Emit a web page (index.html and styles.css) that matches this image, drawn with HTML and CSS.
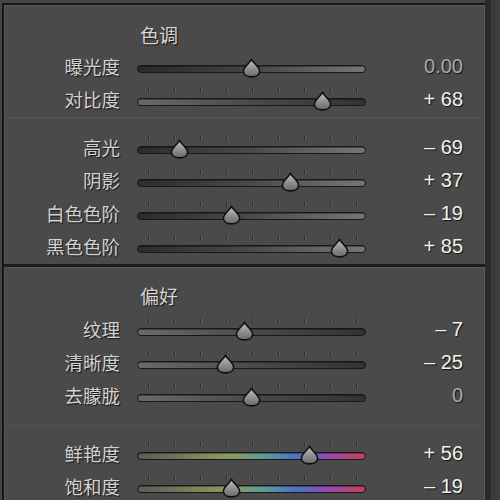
FILE: index.html
```html
<!DOCTYPE html>
<html lang="zh-CN">
<head>
<meta charset="utf-8">
<title>调整</title>
<link rel="stylesheet" href="styles.css">
</head>
<body>
<svg width="0" height="0" class="defs" aria-hidden="true">
  <defs>
    <linearGradient id="thumbFill" x1="0" y1="0" x2="0" y2="1">
      <stop offset="0" stop-color="#c4c4c4"/>
      <stop offset="0.55" stop-color="#8e8e8e"/>
      <stop offset="1" stop-color="#6a6a6a"/>
    </linearGradient>
    <symbol id="thumb" viewBox="0 0 19 20">
      <path d="M9.5 1.2 C10.6 4.6 17.6 8.6 17.6 13.2 C17.6 16.8 14 18.9 9.5 18.9 C5 18.9 1.4 16.8 1.4 13.2 C1.4 8.6 8.4 4.6 9.5 1.2 Z" fill="url(#thumbFill)" stroke="#101010" stroke-width="1.6" stroke-linejoin="round"/>
    </symbol>
  </defs>
</svg>
<div class="app">
  <div class="panel">
    <section class="group group-tone">
      <h2 class="group-title">色调</h2>
      <div class="row">
        <span class="label">曝光度</span>
        <div class="slider no-ticks">
          <div class="track track-exposure"></div>
          <svg class="thumb" style="left:114.5px"><use href="#thumb"/></svg>
        </div>
        <span class="value zero">0.00</span>
      </div>
      <div class="row">
        <span class="label">对比度</span>
        <div class="slider">
          <div class="ticks"><i></i><i></i><i></i><i></i><i></i><i></i><i></i><i></i><i></i></div>
          <div class="track track-fade"></div>
          <svg class="thumb" style="left:185.2px"><use href="#thumb"/></svg>
        </div>
        <span class="value">+ 68</span>
      </div>
    </section>
    <section class="group group-light">
      <div class="row">
        <span class="label">高光</span>
        <div class="slider">
          <div class="ticks"><i></i><i></i><i></i><i></i><i></i><i></i><i></i><i></i><i></i></div>
          <div class="track track-rise"></div>
          <svg class="thumb" style="left:42.7px"><use href="#thumb"/></svg>
        </div>
        <span class="value">– 69</span>
      </div>
      <div class="row">
        <span class="label">阴影</span>
        <div class="slider">
          <div class="ticks"><i></i><i></i><i></i><i></i><i></i><i></i><i></i><i></i><i></i></div>
          <div class="track track-rise"></div>
          <svg class="thumb" style="left:153px"><use href="#thumb"/></svg>
        </div>
        <span class="value">+ 37</span>
      </div>
      <div class="row">
        <span class="label">白色色阶</span>
        <div class="slider">
          <div class="ticks"><i></i><i></i><i></i><i></i><i></i><i></i><i></i><i></i><i></i></div>
          <div class="track track-rise"></div>
          <svg class="thumb" style="left:94.7px"><use href="#thumb"/></svg>
        </div>
        <span class="value">– 19</span>
      </div>
      <div class="row">
        <span class="label">黑色色阶</span>
        <div class="slider">
          <div class="ticks"><i></i><i></i><i></i><i></i><i></i><i></i><i></i><i></i><i></i></div>
          <div class="track track-rise"></div>
          <svg class="thumb" style="left:202.9px"><use href="#thumb"/></svg>
        </div>
        <span class="value">+ 85</span>
      </div>
    </section>
    <section class="group group-presence">
      <h2 class="group-title">偏好</h2>
      <div class="row">
        <span class="label">纹理</span>
        <div class="slider">
          <div class="ticks"><i></i><i></i><i></i><i></i><i></i><i></i><i></i><i></i><i></i></div>
          <div class="track track-fade"></div>
          <svg class="thumb" style="left:107.2px"><use href="#thumb"/></svg>
        </div>
        <span class="value">– 7</span>
      </div>
      <div class="row">
        <span class="label">清晰度</span>
        <div class="slider">
          <div class="ticks"><i></i><i></i><i></i><i></i><i></i><i></i><i></i><i></i><i></i></div>
          <div class="track track-fade"></div>
          <svg class="thumb" style="left:88.5px"><use href="#thumb"/></svg>
        </div>
        <span class="value">– 25</span>
      </div>
      <div class="row">
        <span class="label">去朦胧</span>
        <div class="slider">
          <div class="ticks"><i></i><i></i><i></i><i></i><i></i><i></i><i></i><i></i><i></i></div>
          <div class="track track-fade"></div>
          <svg class="thumb" style="left:114.5px"><use href="#thumb"/></svg>
        </div>
        <span class="value zero">0</span>
      </div>
    </section>
    <section class="group group-color">
      <div class="row">
        <span class="label">鲜艳度</span>
        <div class="slider">
          <div class="ticks"><i></i><i></i><i></i><i></i><i></i><i></i><i></i><i></i><i></i></div>
          <div class="track track-color"></div>
          <svg class="thumb" style="left:172.7px"><use href="#thumb"/></svg>
        </div>
        <span class="value">+ 56</span>
      </div>
      <div class="row">
        <span class="label">饱和度</span>
        <div class="slider">
          <div class="ticks"><i></i><i></i><i></i><i></i><i></i><i></i><i></i><i></i><i></i></div>
          <div class="track track-color"></div>
          <svg class="thumb" style="left:94.7px"><use href="#thumb"/></svg>
        </div>
        <span class="value">– 19</span>
      </div>
    </section>
  </div>
  <div class="rail"></div>
</div>
</body>
</html>
```
FILE: styles.css
```css
html, body {
  margin: 0;
  padding: 0;
  width: 500px;
  height: 500px;
  overflow: hidden;
  background: #454545;
}

.defs {
  position: absolute;
  width: 0;
  height: 0;
}

.app {
  display: flex;
  height: 500px;
  padding-top: 3px;
  padding-left: 2px;
  box-sizing: border-box;
  font-family: "Noto Sans CJK SC", "Noto Sans", sans-serif;
}

.panel {
  flex: none;
  width: 481px;
  background: #4a4a4a;
  border-top: 2px solid #161616;
  border-left: 2px solid #161616;
  box-shadow: inset 1px 1px 0 #5a5a5a, inset -1px 0 0 #5c5c5c;
}

.rail {
  flex: none;
  width: 15px;
  margin-top: -3px;
  background: linear-gradient(to right, #2a2a2a 0, #2a2a2a 6px, #3a3a3a 6px, #3d3d3d 100%);
}

.group {
  display: flex;
  flex-direction: column;
}

.group-tone {
  padding-top: 15px;
  padding-bottom: 1px;
  border-bottom: 1px solid #575757;
}

.group-light {
  padding-top: 13px;
  padding-bottom: 1px;
  border-bottom: 3px solid #1c1c1c;
}

.group-presence {
  padding-top: 13px;
  padding-bottom: 13px;
  border-top: 1px solid #585858;
  border-bottom: 1px solid #545454;
}

.group-color {
  padding-top: 11px;
}

.group-title {
  margin: 0 0 0 136px;
  height: 30px;
  line-height: 30px;
  font-size: 19px;
  font-weight: 400;
  color: #d6d6d6;
  text-shadow: 1px 1px 1px #151515;
}

.group-presence .group-title {
  margin-bottom: 2px;
}

.row {
  display: flex;
  align-items: center;
  height: 33px;
}

.label {
  flex: none;
  width: 116px;
  text-align: right;
  font-size: 18.5px;
  color: #d2d2d2;
  text-shadow: 1px 1px 1px #141414;
  line-height: 24px;
  margin-top: -2px;
}

.slider {
  flex: none;
  position: relative;
  width: 229px;
  height: 33px;
  margin-left: 17px;
}

.ticks {
  position: absolute;
  left: 0;
  top: 5px;
  width: 229px;
  height: 5px;
  display: flex;
  padding-left: 11px;
  gap: 25px;
  box-sizing: border-box;
}

.ticks i {
  display: block;
  width: 1px;
  height: 5px;
  background: #2f2f2f;
  box-shadow: 1px 0 0 #5e5e5e;
}

.track {
  position: absolute;
  left: 0;
  right: 0;
  top: 15px;
  height: 6px;
  border: 1px solid #181818;
  border-radius: 4px;
  box-sizing: content-box;
  box-shadow: inset 0 1px 0 rgba(0, 0, 0, 0.35);
}

.track-exposure {
  background: linear-gradient(to right, #2a2a2a, #444 50%, #777);
}

.track-rise {
  background: linear-gradient(to right, #2c2c2c, #4a4a4a 50%, #767676);
}

.track-fade {
  background: linear-gradient(to right, #6a6a6a, #4a4a4a 50%, #333333);
}

.track-color {
  background: linear-gradient(to right, #5a5a5a 0%, #7f835a 25%, #8f9a5e 40%, #5f9c98 55%, #4e72c0 70%, #8e4db5 82%, #c63f5e 100%);
}

.thumb {
  position: absolute;
  top: 8px;
  width: 19px;
  height: 20px;
  margin-left: -9.5px;
  overflow: visible;
}

.value {
  flex: none;
  width: 97px;
  text-align: right;
  font-family: "Liberation Sans", "Noto Sans", sans-serif;
  font-size: 20px;
  color: #f2f2f2;
  text-shadow: 1px 1px 1px #121212;
  white-space: pre;
}

.value.zero {
  color: #a9a9a9;
}
```
